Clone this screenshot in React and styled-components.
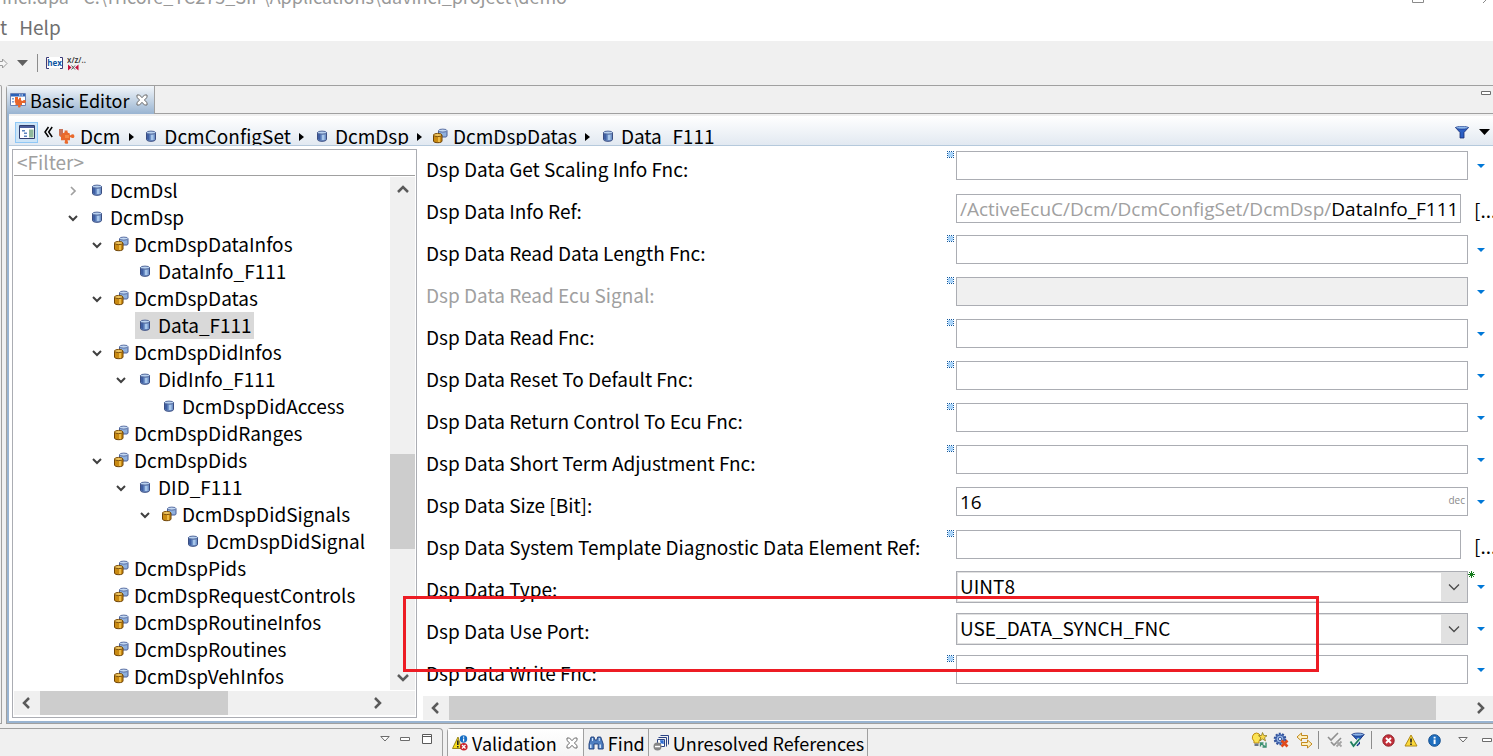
import React from 'react';
import styled, { createGlobalStyle } from 'styled-components';

const Global = createGlobalStyle`
  * { box-sizing: border-box; }
  body { margin: 0; background: #f0f0f0; overflow: hidden; }
  body, button, input, select {
    font-family: "Noto Sans CJK SC", "Open Sans", sans-serif;
    font-size: 19px;
    line-height: 26px;
    color: #000;
  }
  button { border: 0; padding: 0; background: none; white-space: nowrap; }
  svg { display: block; flex: none; }
`;

const Window = styled.div`
  display: flex;
  flex-direction: column;
  min-height: 100vh;
  overflow: hidden;
`;

const TitleBar = styled.header`
  display: flex;
  align-items: flex-end;
  justify-content: space-between;
  height: 14px;
  padding: 0 5px 5px 2px;
  overflow: hidden;
  background: #fff;
  color: #999;
  font-size: 18px;
  white-space: pre;
`;

const MenuBar = styled.nav`
  display: flex;
  gap: 12px;
  height: 27px;
  padding-bottom: 2px;
  background: #fff;
`;

const MenuItem = styled.button`
  color: #707070;
`;

const ToolBar = styled.div`
  display: flex;
  align-items: center;
  height: 44px;
`;

const ToolButton = styled.button`
  display: flex;
  align-items: center;
  justify-content: center;
  width: ${(p) => p.$w || 22}px;
  height: 24px;
  flex: none;
`;

const Separator = styled.span`
  width: 1px;
  height: 18px;
  margin: ${(p) => p.$margin || '0 5px'};
  background: #8c8c8c;
`;

const Workspace = styled.main`
  display: flex;
  gap: 4px;
`;

const SideStub = styled.div`
  width: 2px;
  border: 1px solid #a0a0a0;
  border-left: 0;
  border-top-right-radius: 4px;
`;

const Folder = styled.section`
  flex: 1;
  min-width: 0;
  border-left: 1px solid #a0a0a0;
  border-top: 1px solid #a0a0a0;
  border-bottom: 1px solid #a0a0a0;
  border-top-left-radius: 4px;
`;

const FolderTabs = styled.div`
  display: flex;
  height: 28px;
`;

const EditorTab = styled.button`
  display: flex;
  align-items: center;
  gap: 3px;
  padding: 0 6px 0 3px;
  border-right: 1px solid #a0a0a0;
  background: linear-gradient(#f2f6fa, #99b4d1);
  font-size: 18px;
`;

const TabFill = styled.div`
  display: flex;
  flex: 1;
  justify-content: flex-end;
  padding: 5px 2px 0 0;
  border-bottom: 1px solid #a0a0a0;
`;

const FolderBody = styled.div`
  position: relative;
  border-left: 2px solid #99b4d1;
  border-bottom: 2px solid #99b4d1;
  background: #fff;
`;

const Crumbs = styled.nav`
  display: flex;
  height: 32px;
  padding-left: 6px;
  border-top: 2px solid #f0f0f0;
  border-bottom: 1px solid #b5c9dc;
  background: linear-gradient(#fff, #e2e9f1);
  overflow: hidden;
`;

const CrumbTools = styled.div`
  display: flex;
  align-items: center;
  align-self: flex-start;
  height: 32px;
`;

const LinkedButton = styled.button`
  display: flex;
  align-items: center;
  justify-content: center;
  width: 23px;
  height: 21px;
  border: 1px solid #90c8f6;
  background: #cce4f7;
`;

const Crumb = styled.a`
  display: flex;
  align-items: center;
  gap: 4px;
  height: 26px;
  margin-top: 7px;
  color: #000;
  text-decoration: none;
`;

const CrumbArrow = styled.span`
  display: flex;
  align-items: center;
  justify-content: center;
  width: 22px;
  height: 26px;
  margin-top: 8px;
`;

const IconBox = styled.span`
  display: flex;
  align-items: center;
  justify-content: center;
  width: 18px;
  height: 18px;
  flex: none;
`;

const Spacer = styled.span`
  flex: 1;
`;

const Split = styled.div`
  display: flex;
  align-items: stretch;
`;

const TreePanel = styled.aside`
  display: flex;
  flex-direction: column;
  width: 405px;
  flex: none;
  margin: 3px 0 3px 3px;
  padding: 0 1px 2px;
  border: 1px solid #abadb3;
`;

const FilterInput = styled.input`
  width: 100%;
  height: 26px;
  padding: 0 3px 2px;
  border: 0;
  border-bottom: 1px solid #a0a0a0;
  outline: 0;
  &::placeholder { color: #a0a0a0; opacity: 1; }
`;

const TreeArea = styled.div`
  display: flex;
  margin-top: 1px;
`;

const TreeList = styled.ul`
  flex: 1;
  min-width: 0;
  margin: 0;
  padding: 0;
  list-style: none;
`;

const TreeRow = styled.li`
  display: flex;
  align-items: center;
  height: 27px;
  padding-left: ${(p) => 47 + p.$level * 24}px;
`;

const Twisty = styled.button`
  display: flex;
  align-items: center;
  justify-content: center;
  width: 24px;
  height: 24px;
`;

const TwistyBlank = styled.span`
  width: 24px;
`;

const TreeLabel = styled.button`
  display: flex;
  align-items: center;
  gap: 4px;
  height: 27px;
  margin-left: 2px;
  padding: 0 2px 2px 1px;
  background: ${(p) => (p.$selected ? '#d9d9d9' : 'none')};
`;

const VScroll = styled.div`
  display: flex;
  flex-direction: column;
  width: 25px;
  background: #f0f0f0;
`;

const HScroll = styled.div`
  display: flex;
  height: 24px;
  margin-top: ${(p) => p.$top || 0}px;
  background: #f0f0f0;
`;

const ScrollButton = styled.button`
  display: flex;
  align-items: center;
  justify-content: center;
  width: 26px;
  height: 26px;
  flex: none;
  ${HScroll} & { height: 24px; }
`;

const Track = styled.div`
  flex: ${(p) => p.$grow};
`;

const Thumb = styled(Track)`
  background: #cdcdcd;
`;

const FormPane = styled.div`
  display: flex;
  flex-direction: column;
  flex: 1;
  min-width: 0;
  padding: 0 0 1px 6px;
`;

const Rows = styled.form`
  flex: 1 1 0;
  min-height: 0;
  padding-top: 5px;
  overflow: hidden;
  contain: size;
`;

const FieldRow = styled.div`
  display: flex;
  height: 42px;
  padding: ${(p) => (p.$ref ? 1 : 0)}px 0 0 3px;
`;

const Label = styled.label`
  width: 521px;
  flex: none;
  padding-top: ${(p) => (p.$ref ? 4 : 5)}px;
  color: ${(p) => (p.$off ? '#a0a0a0' : '#000')};
  white-space: nowrap;
`;

const MarkCell = styled.span`
  width: 9px;
  flex: none;
`;

const TextInput = styled.input`
  flex: 1;
  min-width: 0;
  height: 29px;
  padding: 0 4px;
  border: 1px solid #abadb3;
  background: #fff;
  outline: 0;
  &:disabled { background: #f0f0f0; }
`;

const Composite = styled.div`
  display: flex;
  align-items: center;
  flex: 1;
  min-width: 0;
  height: 29px;
  padding-left: 3px;
  border: 1px solid #abadb3;
  overflow: hidden;
  font-family: "Open Sans", sans-serif;
`;

const PathPrefix = styled.span`
  color: #a0a0a0;
`;

const BareInput = styled.input`
  flex: 1;
  min-width: 0;
  height: 26px;
  padding: 0;
  border: 0;
  outline: 0;
  font-family: inherit;
`;

const Radix = styled.span`
  height: 26px;
  padding-right: 2px;
  font-size: 10px;
  line-height: 22px;
  color: #8a8a8a;
`;

const SelectFrame = styled.div`
  position: relative;
  display: flex;
  flex: 1;
  min-width: 0;
  height: 32px;
  padding: 1px 26px 1px 1px;
  border: 1px solid #abadb3;
  background: #e1e1e1;
`;

const Select = styled.select`
  flex: 1;
  min-width: 0;
  appearance: none;
  padding: 0 2px 2px;
  border: 0;
  background: #fff;
  outline: 0;
`;

const SelectArrow = styled.span`
  position: absolute;
  right: 7px;
  top: 11px;
  pointer-events: none;
`;

const Tail = styled.div`
  position: relative;
  display: flex;
  width: ${(p) => (p.$ref ? 32 : 25)}px;
  height: ${(p) => p.$h || 29}px;
  flex: none;
  align-items: center;
  justify-content: ${(p) => (p.$ref ? 'flex-start' : 'center')};
  padding: ${(p) => (p.$ref ? '3px 0 0 13px' : '0')};
`;

const ChangedMark = styled.span`
  position: absolute;
  left: 0;
  top: 0;
`;

const Highlight = styled.div`
  position: absolute;
  left: 394px;
  right: 174px;
  bottom: 49px;
  height: 76px;
  border: 3px solid #ed1c24;
  pointer-events: none;
`;

const BottomBar = styled.footer`
  display: flex;
  flex: 1;
  gap: 4px;
  padding-top: 4px;
  min-height: 32px;
`;

const BottomLeft = styled.section`
  display: flex;
  justify-content: flex-end;
  width: 443px;
  flex: none;
  padding-right: 3px;
  border: 1px solid #a0a0a0;
  border-width: 1px 1px 0 0;
  border-top-right-radius: 4px;
`;

const BottomRight = styled.section`
  display: flex;
  flex: 1;
  min-width: 0;
  border: 1px solid #a0a0a0;
  border-width: 1px 0 0 1px;
  border-top-left-radius: 4px;
`;

const ViewTab = styled.button`
  display: flex;
  align-items: center;
  gap: 4px;
  height: 28px;
  padding: 0 3px 0 4px;
  border-right: 1px solid #a0a0a0;
  background: ${(p) => (p.$active ? 'linear-gradient(#fff, #f4f4f4)' : 'none')};
  font-size: 18px;
`;

const Close = styled.span`
  padding: ${(p) => p.$pad};
`;

const ViewTools = styled.div`
  display: flex;
  align-items: center;
  height: ${(p) => p.$h}px;
`;

/* ---------- icons ---------- */

const Cylinder = () => (
  <svg width="12" height="12" viewBox="0 0 12 12">
    <path d="M1.500 2.500v7c0 .9 1.800 1.800 4.500 1.800s4.500-.9 4.500-1.800v-7z" fill="#6f92c8" stroke="#3b4d80" />
    <path d="M2 4h2.500v6.300L2 9.500z" fill="#3f5fa3" />
    <path d="M6 4.500h2.500v5.500H6z" fill="#a8c6ea" />
    <ellipse cx="6" cy="2.600" rx="4.500" ry="1.500" fill="#b9d2f0" stroke="#52689b" />
  </svg>
);

const Cylinders = () => (
  <svg width="16" height="16" viewBox="0 0 16 16">
    <path d="M6.500 3v6h7.500c.6-.3 1-.6 1-1V3z" fill="#8fb0dd" stroke="#4a5f96" />
    <ellipse cx="10.800" cy="2.600" rx="4.200" ry="1.500" fill="#c3d8f2" stroke="#5b70a4" />
    <path d="M1.500 7v6c0 1 1.700 1.700 4.300 1.700s4.200-.7 4.200-1.700V7z" fill="#c98a12" stroke="#6d4206" />
    <path d="M6 8.500h2v5.500H6z" fill="#eebb45" />
    <ellipse cx="5.700" cy="7" rx="4.200" ry="1.600" fill="#ecc25c" stroke="#7d500c" />
  </svg>
);

const Puzzle = () => (
  <svg width="18" height="18" viewBox="0 0 18 18">
    <path d="M1 2h4v4c1.500.3 2-1 1.500-2.500h3c-.3 1.800.4 2.800 2 2.500l.500 2.500c1-.2 1.400-1.500 3-1.300 1.600.2 2 3.300.3 3.700-1.700.3-2-1-3.300-.7v3H9.600c-.3 1 .8 1.600.5 2.700-.5 1.300-3.200 1.200-3.500-.2-.2-1 .8-1.500.4-2.500H3V10C1.500 9.500 1 8.500 1 7z" fill="#e9692c" />
    <path d="M1 2h4v3.500L2.500 9 1 7z" fill="#c7735a" />
    <path d="M7 8h4v3H7z" fill="#f58a45" />
  </svg>
);

const EditorIcon = () => (
  <svg width="17" height="16" viewBox="0 0 17 16">
    <path d="M.5 1.500h15v12H.5z" fill="#fff" stroke="#6b83b5" />
    <path d="M1 2h14v2.500H1z" fill="#2b62b8" />
    <path d="M9 2.500h1.500v1H9zM11.500 2.500H13v1h-1.500z" fill="#fff" />
    <path d="M2 6h2v1.500H2zM2 9h2v1.500H2z" fill="#7fa0d4" />
    <path d="M5 5h3v2.500c1 .2 1.200-.8 1-1.700h2v2.500l1.500.7c.8-1.300 2.800-1.200 3.300 0 .4 1.500-1 2.600-2.300 2H12v2h-1.500c-.2.800.4 1.300 0 2-.7.900-2.200.7-2.500-.3-.1-.7.400-1 .2-1.700H5.500V11C4.500 10.300 4.600 9 5 8z" fill="#e8652a" />
  </svg>
);

const TreeIcon = () => (
  <svg width="16" height="14" viewBox="0 0 16 14">
    <path d="M.5.5h15v13H.5z" fill="#fff" stroke="#2f3c6c" />
    <path d="M1 1h14v2H1z" fill="#4c5f9c" />
    <path d="M3 5h3v1.500H3zM5 7.500h3V9H5zM5 10.500h3V12H5z" fill="#5d86bd" />
    <path d="M10 4.500h4.500V12.500H10z" fill="#8fb89b" />
  </svg>
);

const CloseX = () => (
  <svg width="12" height="12" viewBox="0 0 12 12">
    <path d="M1 1h2.500L6 3.700 8.500 1H11v2.500L8.300 6 11 8.500V11H8.500L6 8.300 3.500 11H1V8.500L3.700 6 1 3.500z" fill="#fff" stroke="#6c6c6c" />
  </svg>
);

const Triangle = ({ w = 11, h = 6, color = '#000' }) => (
  <svg width={w} height={h} viewBox="0 0 10 6" preserveAspectRatio="none">
    <path d="M0 0h10L5 6z" fill={color} />
  </svg>
);

const HollowTriangle = () => (
  <svg width="10" height="6" viewBox="0 0 10 6">
    <path d="M.8.5h8.400L5 5z" fill="#fff" stroke="#6c6c6c" />
  </svg>
);

const Minimize = () => (
  <svg width="10" height="4" viewBox="0 0 10 4">
    <path d="M.5.5h9v3h-9z" fill="#fff" stroke="#6c6c6c" />
  </svg>
);

const Maximize = () => (
  <svg width="10" height="10" viewBox="0 0 10 10">
    <path d="M.5.5h9v9h-9zM.5 2.500h9" fill="#fff" stroke="#5a5a5a" />
  </svg>
);

const arrowPaths = {
  up: 'M2 9l5-5 5 5',
  down: 'M2 5l5 5 5-5',
  left: 'M9 2L4 7l5 5',
  right: 'M5 2l5 5-5 5',
};

const ScrollArrow = ({ dir }) => (
  <svg width="14" height="14" viewBox="0 0 14 14">
    <path d={arrowPaths[dir]} fill="none" stroke="#5a5a5a" strokeWidth="2.500" />
  </svg>
);

const Chevron = ({ open }) => (
  <svg width="10" height="10" viewBox="0 0 10 10">
    <path
      d={open ? 'M1 3l4 4 4-4' : 'M3 1l4 4-4 4'}
      fill="none"
      stroke={open ? '#404040' : '#a0a0a0'}
      strokeWidth={open ? 2 : 1.700}
    />
  </svg>
);

const ComboChevron = () => (
  <svg width="12" height="8" viewBox="0 0 12 8">
    <path d="M1 1.500l5 5 5-5" fill="none" stroke="#4a4a4a" strokeWidth="1.300" />
  </svg>
);

const CrumbTriangle = () => (
  <svg width="5" height="8" viewBox="0 0 5 8">
    <path d="M0 0l5 4-5 4z" />
  </svg>
);

const DoubleChevron = () => (
  <svg width="9" height="12" viewBox="0 0 9 12">
    <path d="M4.500 1L1 6l3.500 5M8.200 1L4.700 6l3.500 5" fill="none" stroke="#000" strokeWidth="1.500" />
  </svg>
);

const Funnel = () => (
  <svg width="14" height="13" viewBox="0 0 14 13">
    <path d="M.5 1.500l4.500 5v5.500h4V6.500l4.500-5z" fill="#2b5fc4" stroke="#1a2d72" strokeWidth=".8" />
    <ellipse cx="7" cy="1.700" rx="6.400" ry="1.400" fill="#8db8ec" stroke="#1f3c8c" strokeWidth=".7" />
  </svg>
);

const UndefinedMark = () => (
  <svg width="7" height="7" viewBox="0 0 7 7" shapeRendering="crispEdges">
    <path d="M1 1h5v5H1z" fill="#a9d4fa" />
    <path d="M0 .5h7M0 6.500h7M.5 0v7M6.500 0v7" stroke="#14589c" strokeDasharray="1 1" />
  </svg>
);

const Asterisk = () => (
  <svg width="7" height="7" viewBox="0 0 7 7">
    <path d="M3.500 0v7M0 3.500h7M1 1l5 5M6 1L1 6" stroke="#157a1c" />
  </svg>
);

const ForwardArrow = () => (
  <svg width="8" height="11" viewBox="0 0 8 11">
    <path d="M0 3.500h2.500V1L7 5.500 2.500 10V7.500H0" fill="#f6f6f6" stroke="#9a9a9a" />
  </svg>
);

const HexIcon = () => (
  <svg width="17" height="14" viewBox="0 0 17 14">
    <path d="M.5 1h16v11H.5z" fill="#fff" />
    <path d="M3 1.500H.5v11H3M14 1.500h2.500v11H14" fill="none" stroke="#3c3c78" />
    <text x="8.500" y="10" textAnchor="middle" fontSize="8" fontWeight="700" fontFamily="Open Sans, sans-serif" fill="#0c56a4">hex</text>
  </svg>
);

const ShortNameIcon = () => (
  <svg width="20" height="16" viewBox="0 0 20 16">
    <text x="0" y="8" fontSize="8" fontWeight="600" fontFamily="Open Sans, sans-serif" fill="#333">x/z/..</text>
    <path d="M1 9.500l3.500 3L1 15.500zM11.500 9.500l-3.500 3 3.500 3z" fill="#c4103c" />
    <path d="M4.500 10.500l3.500 4M8 10.500l-3.500 4" stroke="#555" />
  </svg>
);

const ValidationIcon = () => (
  <svg width="16" height="16" viewBox="0 0 16 16">
    <path d="M6 2L.5 13.500h9z" fill="#f6dc1c" stroke="#8e7a10" strokeWidth=".9" />
    <path d="M5 5.500h1.600V10H5zM5 11h1.600v1.500H5z" fill="#222" />
    <circle cx="11.500" cy="4" r="3.700" fill="#1a6fc4" />
    <path d="M11 3.500h1.200v3H11zM11 1.500h1.200v1.200H11z" fill="#fff" />
    <circle cx="11.800" cy="11.800" r="3.800" fill="#c9222c" />
    <path d="M10 10l3.500 3.500M13.500 10L10 13.500" stroke="#fff" strokeWidth="1.300" />
  </svg>
);

const Binoculars = () => (
  <svg width="16" height="14" viewBox="0 0 16 14">
    <path d="M3 1h3l.8 3h2L9.700 1h3l2.500 7v5h-5V8H6v5H1V8z" fill="#4f7fc0" stroke="#1d3c78" strokeWidth=".9" />
    <path d="M2 8.500h1.500V12H2zM11.500 8.500H13V12h-1.500zM4 2h1v3H4zM10.800 2h1v3h-1z" fill="#cfe2f7" />
  </svg>
);

const UnresolvedIcon = () => (
  <svg width="16" height="16" viewBox="0 0 16 16">
    <path d="M7.500.5h8v9M5.500 2.500h8v9" fill="none" stroke="#2a4385" />
    <path d="M4.500 4.500h7v7h-7z" fill="#fff" stroke="#2a4385" />
    <path d="M6 10l3.500-3.500M7 6h3v3" fill="none" stroke="#2b6ad0" strokeWidth="1.400" />
    <circle cx="4.500" cy="11.500" r="4" fill="#858585" />
    <path d="M2 10.800h5v1.500H2z" fill="#fff" />
  </svg>
);

const BulbIcon = () => (
  <svg width="17" height="16" viewBox="0 0 17 16">
    <path d="M5.500 1a4.500 4.500 0 0 0-2.500 8v2h5V9A4.500 4.500 0 0 0 5.500 1z" fill="#fbe354" stroke="#c08e12" />
    <path d="M3.500 11.500h4V14h-4z" fill="#6d7686" />
    <path d="M11.500.5l1.300 3 3.200.2-2.500 2 1 3.100-3-1.800-2.500 1.800.8-3.100-2.300-2 3-.2z" fill="#f9d84a" stroke="#8d7a22" strokeWidth=".8" />
    <path d="M9.500 14.500V11h3M9.500 11l5 4M15 10.500V15h-3.500" fill="none" stroke="#3c9070" strokeWidth="1.400" />
  </svg>
);

const GearXIcon = () => (
  <svg width="16" height="16" viewBox="0 0 16 16">
    <circle cx="7" cy="7" r="5.300" fill="#7d9fd6" stroke="#33529b" strokeWidth="2" strokeDasharray="2 1.300" />
    <circle cx="7" cy="7" r="4" fill="#8fb0e0" stroke="#3b5aa3" />
    <circle cx="7" cy="7" r="1.600" fill="#fff" stroke="#3b5aa3" />
    <path d="M8.500 8.500l6 6M14.500 8.500l-6 6" stroke="#e04a1c" strokeWidth="2.600" />
  </svg>
);

const SwapIcon = () => (
  <svg width="17" height="17" viewBox="0 0 17 17">
    <path d="M1 5L5.500 1v2.500h6v3h-6V9zM16 12l-4.500-4v2.500h-6v3h6V16z" fill="#fdf0c0" stroke="#c38a1e" />
  </svg>
);

const ChecksOffIcon = () => (
  <svg width="16" height="16" viewBox="0 0 16 16">
    <path d="M1 5l3 3 7-7M4 10l3 3 7-7" fill="none" stroke="#8f8f8f" strokeWidth="1.600" />
    <path d="M9.500 9.500l5 5M14.500 9.500l-5 5" stroke="#a5a5a5" strokeWidth="1.800" />
  </svg>
);

const FilterCheckIcon = () => (
  <svg width="16" height="16" viewBox="0 0 16 16">
    <path d="M3 2.500h12L10.500 8v4L8 14V8z" fill="#2860bd" stroke="#1a3580" />
    <ellipse cx="9" cy="2.600" rx="6" ry="1.500" fill="#8cb4e8" stroke="#1a3580" strokeWidth=".8" />
    <path d="M1.500 9.500l3 4.500 6-7" fill="none" stroke="#e4f4ec" strokeWidth="3.600" />
    <path d="M1.500 9.500l3 4.500 6-7" fill="none" stroke="#1f7d5e" strokeWidth="1.800" />
  </svg>
);

const ErrorIcon = () => (
  <svg width="13" height="13" viewBox="0 0 13 13">
    <circle cx="6.500" cy="6.500" r="5.700" fill="#c4303a" stroke="#8f2028" />
    <path d="M4 4l5 5M9 4L4 9" stroke="#fff" strokeWidth="1.900" />
  </svg>
);

const WarningIcon = () => (
  <svg width="14" height="13" viewBox="0 0 14 13">
    <path d="M7 1L1 12h12z" fill="#fbd83a" stroke="#b08a18" strokeLinejoin="round" />
    <path d="M6.200 4.500h1.600V8.500H6.200zM6.200 9.500h1.600V11H6.200z" fill="#222" />
  </svg>
);

const InfoIcon = () => (
  <svg width="13" height="13" viewBox="0 0 13 13">
    <circle cx="6.500" cy="6.500" r="5.800" fill="#1f6fc0" stroke="#124c8c" />
    <path d="M5.600 5.500h2V10h-2zM5.600 2.700h2v1.700h-2z" fill="#fff" />
  </svg>
);

const WindowControls = () => (
  <svg width="76" height="12" viewBox="0 0 76 12">
    <path d="M.5-4.500h11v10H.5z" fill="none" stroke="#8a8a8a" />
    <path d="M71 6l5-5" stroke="#8a8a8a" />
  </svg>
);

/* ---------- data ---------- */

const tree = [
  { name: 'DcmDsl', level: 0, open: false },
  { name: 'DcmDsp', level: 0, open: true },
  { name: 'DcmDspDataInfos', level: 1, open: true, many: true },
  { name: 'DataInfo_F111', level: 2 },
  { name: 'DcmDspDatas', level: 1, open: true, many: true },
  { name: 'Data_F111', level: 2, selected: true },
  { name: 'DcmDspDidInfos', level: 1, open: true, many: true },
  { name: 'DidInfo_F111', level: 2, open: true },
  { name: 'DcmDspDidAccess', level: 3 },
  { name: 'DcmDspDidRanges', level: 1, many: true },
  { name: 'DcmDspDids', level: 1, open: true, many: true },
  { name: 'DID_F111', level: 2, open: true },
  { name: 'DcmDspDidSignals', level: 3, open: true, many: true },
  { name: 'DcmDspDidSignal', level: 4 },
  { name: 'DcmDspPids', level: 1, many: true },
  { name: 'DcmDspRequestControls', level: 1, many: true },
  { name: 'DcmDspRoutineInfos', level: 1, many: true },
  { name: 'DcmDspRoutines', level: 1, many: true },
  { name: 'DcmDspVehInfos', level: 1, many: true },
];

const crumbs = [
  { name: 'Dcm', icon: <Puzzle /> },
  { name: 'DcmConfigSet', icon: <Cylinder /> },
  { name: 'DcmDsp', icon: <Cylinder /> },
  { name: 'DcmDspDatas', icon: <Cylinders /> },
  { name: 'Data_F111', icon: <Cylinder /> },
];

const fields = [
  { id: 'scaling', label: 'Dsp Data Get Scaling Info Fnc:', mark: true },
  { id: 'inforef', label: 'Dsp Data Info Ref:', kind: 'ref', prefix: '/ActiveEcuC/Dcm/DcmConfigSet/DcmDsp/', value: 'DataInfo_F111' },
  { id: 'readlen', label: 'Dsp Data Read Data Length Fnc:', mark: true },
  { id: 'readecu', label: 'Dsp Data Read Ecu Signal:', mark: true, disabled: true },
  { id: 'read', label: 'Dsp Data Read Fnc:', mark: true },
  { id: 'reset', label: 'Dsp Data Reset To Default Fnc:', mark: true },
  { id: 'return', label: 'Dsp Data Return Control To Ecu Fnc:', mark: true },
  { id: 'adjust', label: 'Dsp Data Short Term Adjustment Fnc:', mark: true },
  { id: 'size', label: 'Dsp Data Size [Bit]:', kind: 'number', value: '16' },
  { id: 'template', label: 'Dsp Data System Template Diagnostic Data Element Ref:', kind: 'ref', mark: true },
  { id: 'type', label: 'Dsp Data Type:', kind: 'select', value: 'UINT8', changed: true },
  { id: 'port', label: 'Dsp Data Use Port:', kind: 'select', value: 'USE_DATA_SYNCH_FNC' },
  { id: 'write', label: 'Dsp Data Write Fnc:', mark: true },
];

function Control({ field }) {
  const { id, kind, value, prefix, disabled } = field;
  if (kind === 'select') {
    return (
      <SelectFrame>
        <Select id={id} defaultValue={value}>
          <option>{value}</option>
        </Select>
        <SelectArrow><ComboChevron /></SelectArrow>
      </SelectFrame>
    );
  }
  if (prefix) {
    return (
      <Composite>
        <PathPrefix>{prefix}</PathPrefix>
        <BareInput id={id} defaultValue={value} />
      </Composite>
    );
  }
  if (kind === 'number') {
    return (
      <Composite>
        <BareInput id={id} defaultValue={value} />
        <Radix>dec</Radix>
      </Composite>
    );
  }
  return <TextInput id={id} type="text" disabled={disabled} />;
}

function Field({ field }) {
  const isRef = field.kind === 'ref';
  return (
    <FieldRow $ref={isRef}>
      <Label htmlFor={field.id} $off={field.disabled} $ref={isRef}>{field.label}</Label>
      <MarkCell>{field.mark && <UndefinedMark />}</MarkCell>
      <Control field={field} />
      <Tail $ref={isRef} $h={field.kind === 'select' ? 32 : 29}>
        {field.changed && <ChangedMark><Asterisk /></ChangedMark>}
        {isRef ? (
          <button type="button">[...]</button>
        ) : (
          <ToolButton type="button" aria-label="Options"><Triangle w={8} h={4} color="#0078d7" /></ToolButton>
        )}
      </Tail>
    </FieldRow>
  );
}

export default function App() {
  return (
    <Window>
      <Global />
      <TitleBar>
        <span>inci.dpa - C:\Tricore_TC275_SIP\Applications\davinci_project\demo</span>
        <WindowControls />
      </TitleBar>
      <MenuBar>
        <MenuItem>t</MenuItem>
        <MenuItem>Help</MenuItem>
      </MenuBar>
      <ToolBar>
        <ToolButton $w={8} aria-label="Forward"><ForwardArrow /></ToolButton>
        <ToolButton $w={29} aria-label="Forward history"><Triangle color="#606060" /></ToolButton>
        <Separator $margin="0 5px 0 0" />
        <ToolButton aria-label="Hexadecimal"><HexIcon /></ToolButton>
        <ToolButton $w={24} aria-label="Short names"><ShortNameIcon /></ToolButton>
      </ToolBar>

      <Workspace>
        <SideStub />
        <Folder>
          <FolderTabs>
            <EditorTab>
              <EditorIcon />
              Basic Editor
              <Close $pad="0 0 0 4px"><CloseX /></Close>
            </EditorTab>
            <TabFill><Minimize /></TabFill>
          </FolderTabs>
          <FolderBody>
            <Crumbs>
              <CrumbTools>
                <LinkedButton aria-label="Show tree"><TreeIcon /></LinkedButton>
                <ToolButton $w={20} aria-label="Collapse"><DoubleChevron /></ToolButton>
              </CrumbTools>
              {crumbs.map((c, i) => (
                <React.Fragment key={c.name}>
                  {i > 0 && <CrumbArrow><CrumbTriangle /></CrumbArrow>}
                  <Crumb href="#"><IconBox>{c.icon}</IconBox>{c.name}</Crumb>
                </React.Fragment>
              ))}
              <Spacer />
              <CrumbTools>
                <ToolButton $w={26} aria-label="Filter"><Funnel /></ToolButton>
                <ToolButton $w={18} aria-label="View menu"><Triangle /></ToolButton>
              </CrumbTools>
            </Crumbs>
            <Split>
              <TreePanel>
                <FilterInput placeholder="<Filter>" aria-label="Filter" />
                <TreeArea>
                  <TreeList>
                    {tree.map((n) => (
                      <TreeRow key={n.name} $level={n.level}>
                        {n.open === undefined ? (
                          <TwistyBlank />
                        ) : (
                          <Twisty aria-label="Toggle"><Chevron open={n.open} /></Twisty>
                        )}
                        <TreeLabel $selected={n.selected}>
                          <IconBox>{n.many ? <Cylinders /> : <Cylinder />}</IconBox>
                          {n.name}
                        </TreeLabel>
                      </TreeRow>
                    ))}
                  </TreeList>
                  <VScroll>
                    <ScrollButton aria-label="Up"><ScrollArrow dir="up" /></ScrollButton>
                    <Track $grow={251} />
                    <Thumb $grow={95} />
                    <Track $grow={115} />
                    <ScrollButton aria-label="Down"><ScrollArrow dir="down" /></ScrollButton>
                  </VScroll>
                </TreeArea>
                <HScroll $top={1}>
                  <ScrollButton aria-label="Left"><ScrollArrow dir="left" /></ScrollButton>
                  <Thumb $grow={188} />
                  <Track $grow={136} />
                  <ScrollButton aria-label="Right"><ScrollArrow dir="right" /></ScrollButton>
                  <VScroll />
                </HScroll>
              </TreePanel>
              <FormPane>
                <Rows>
                  {fields.map((f) => <Field key={f.id} field={f} />)}
                </Rows>
                <HScroll>
                  <ScrollButton aria-label="Left"><ScrollArrow dir="left" /></ScrollButton>
                  <Thumb $grow={987} />
                  <Track $grow={31} />
                  <ScrollButton aria-label="Right"><ScrollArrow dir="right" /></ScrollButton>
                </HScroll>
              </FormPane>
            </Split>
            <Highlight />
          </FolderBody>
        </Folder>
      </Workspace>

      <BottomBar>
        <BottomLeft>
          <ViewTools $h={20}>
            <ToolButton $w={20} aria-label="View menu"><HollowTriangle /></ToolButton>
            <ToolButton $w={20} aria-label="Minimize"><Minimize /></ToolButton>
            <ToolButton $w={24} aria-label="Maximize"><Maximize /></ToolButton>
          </ViewTools>
        </BottomLeft>
        <BottomRight>
          <ViewTab $active>
            <ValidationIcon />
            Validation
            <Close $pad="0 2px 0 5px"><CloseX /></Close>
          </ViewTab>
          <ViewTab><Binoculars />Find</ViewTab>
          <ViewTab><UnresolvedIcon />Unresolved References</ViewTab>
          <Spacer />
          <ViewTools $h={22}>
            <ToolButton aria-label="Solve"><BulbIcon /></ToolButton>
            <ToolButton aria-label="Stop validation"><GearXIcon /></ToolButton>
            <ToolButton $w={24} aria-label="Synchronize"><SwapIcon /></ToolButton>
            <Separator $margin="0 5px 0 2px" />
            <ToolButton aria-label="Clear acknowledged"><ChecksOffIcon /></ToolButton>
            <ToolButton aria-label="Filter results"><FilterCheckIcon /></ToolButton>
            <Separator $margin="0 5px 0 3px" />
            <ToolButton aria-label="Errors"><ErrorIcon /></ToolButton>
            <ToolButton $w={24} aria-label="Warnings"><WarningIcon /></ToolButton>
            <ToolButton aria-label="Infos"><InfoIcon /></ToolButton>
            <ToolButton $w={36} aria-label="View menu"><HollowTriangle /></ToolButton>
            <ToolButton $w={12} aria-label="Minimize"><Minimize /></ToolButton>
          </ViewTools>
        </BottomRight>
      </BottomBar>
    </Window>
  );
}
